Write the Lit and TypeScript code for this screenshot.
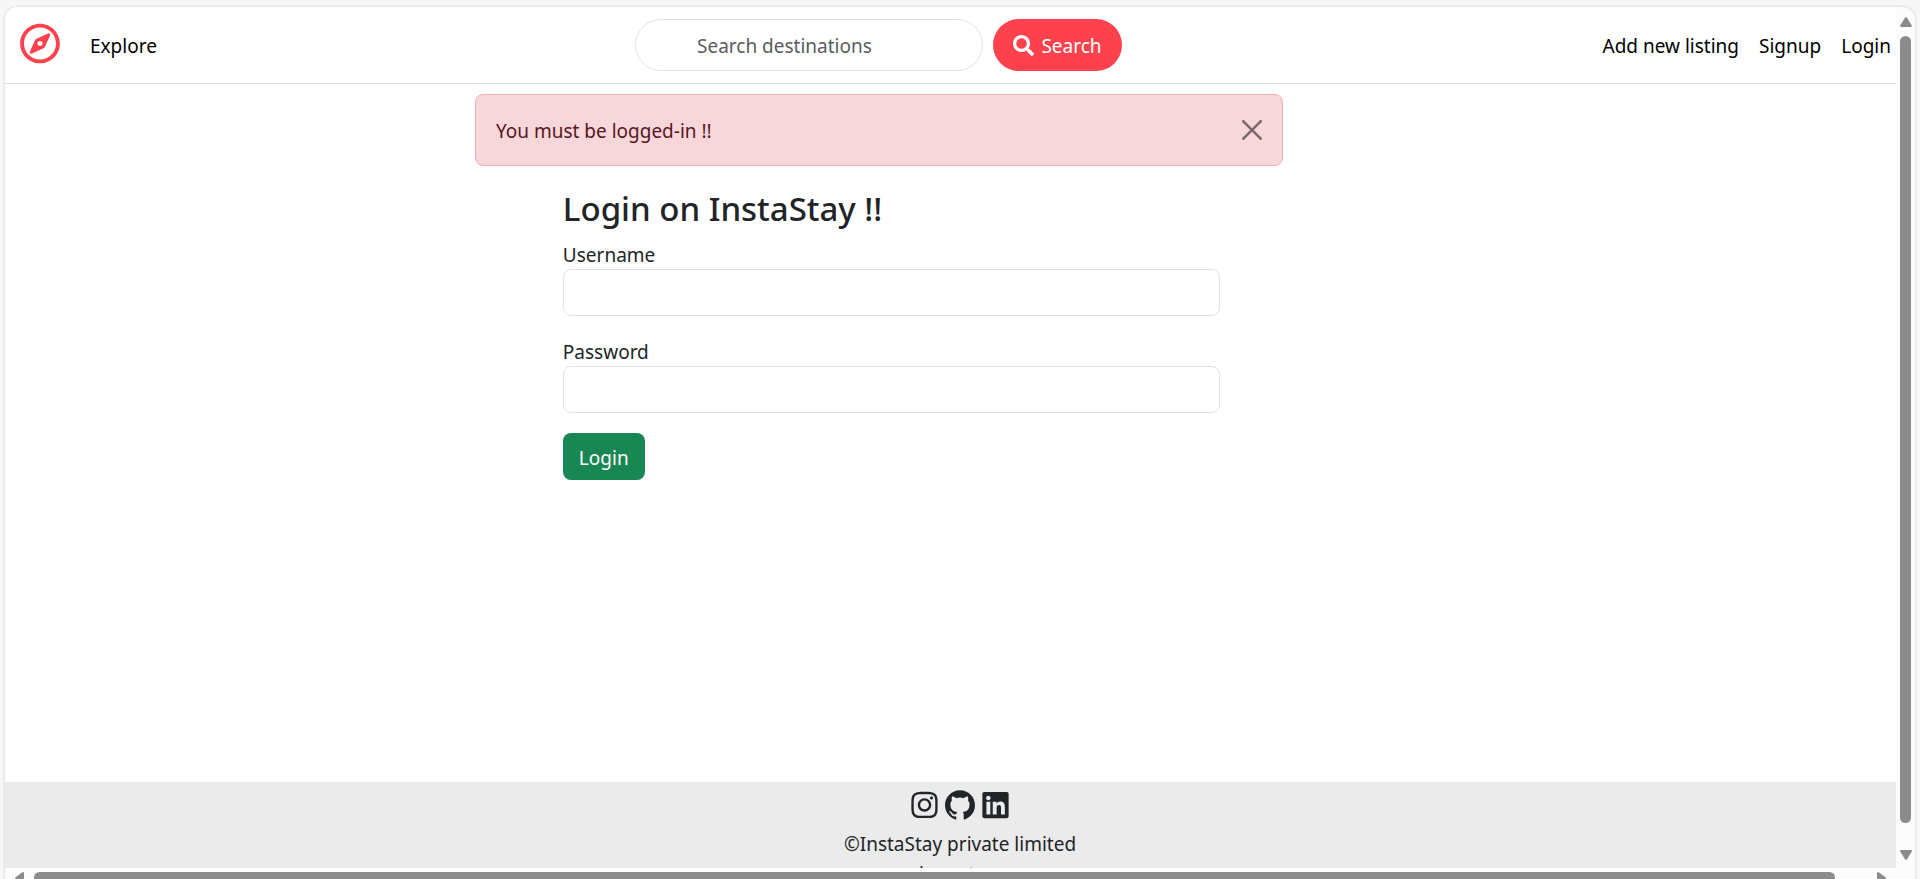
import { LitElement, html, css, svg } from "lit";
import { customElement, state } from "lit/decorators.js";

const icon = (viewBox: string, d: string, cls: string) =>
  html`<svg class=${cls} viewBox=${viewBox} aria-hidden="true">${svg`<path fill="currentColor" d=${d}></path>`}</svg>`;

const COMPASS =
  "M347.94 129.86L203.6 195.83a31.938 31.938 0 0 0-15.77 15.77l-65.97 144.34c-7.61 16.65 9.54 33.81 26.2 26.2l144.34-65.97a31.938 31.938 0 0 0 15.77-15.77l65.97-144.34c7.61-16.66-9.54-33.81-26.2-26.2zm-77.36 148.72c-12.47 12.47-32.69 12.47-45.16 0-12.47-12.47-12.47-32.69 0-45.16 12.47-12.47 32.69-12.47 45.16 0 12.47 12.47 12.47 32.69 0 45.16zM248 8C111.03 8 0 119.03 0 256s111.03 248 248 248 248-111.03 248-248S384.97 8 248 8zm0 448c-110.28 0-200-89.72-200-200S137.72 56 248 56s200 89.72 200 200-89.72 200-200 200z";
const MAGNIFIER =
  "M505 442.7L405.3 343c-4.5-4.5-10.6-7-17-7H372c27.6-35.3 44-79.7 44-128C416 93.1 322.9 0 208 0S0 93.1 0 208s93.1 208 208 208c48.3 0 92.7-16.4 128-44v16.3c0 6.4 2.5 12.5 7 17l99.7 99.7c9.4 9.4 24.6 9.4 33.9 0l28.3-28.3c9.4-9.4 9.4-24.6.1-34zM208 336c-70.7 0-128-57.2-128-128 0-70.7 57.2-128 128-128 70.7 0 128 57.2 128 128 0 70.7-57.2 128-128 128z";
const CROSS =
  "M.293.293a1 1 0 0 1 1.414 0L8 6.586 14.293.293a1 1 0 1 1 1.414 1.414L9.414 8l6.293 6.293a1 1 0 0 1-1.414 1.414L8 9.414l-6.293 6.293a1 1 0 0 1-1.414-1.414L6.586 8 .293 1.707a1 1 0 0 1 0-1.414z";
const INSTAGRAM =
  "M224.1 141c-63.6 0-114.9 51.3-114.9 114.9s51.3 114.9 114.9 114.9S339 319.5 339 255.9 287.7 141 224.1 141zm0 189.6c-41.1 0-74.7-33.5-74.7-74.7s33.5-74.7 74.7-74.7 74.7 33.5 74.7 74.7-33.6 74.7-74.7 74.7zm146.4-194.3c0 14.9-12 26.8-26.8 26.8-14.9 0-26.8-12-26.8-26.8s12-26.8 26.8-26.8 26.8 12 26.8 26.8zm76.1 27.2c-1.7-35.9-9.9-67.7-36.2-93.9-26.2-26.2-58-34.4-93.9-36.2-37-2.1-147.9-2.1-184.9 0-35.8 1.7-67.6 9.9-93.9 36.1s-34.4 58-36.2 93.9c-2.1 37-2.1 147.9 0 184.9 1.7 35.9 9.9 67.7 36.2 93.9s58 34.4 93.9 36.2c37 2.1 147.9 2.1 184.9 0 35.9-1.7 67.7-9.9 93.9-36.2 26.2-26.2 34.4-58 36.2-93.9 2.1-37 2.1-147.8 0-184.8zM398.8 388c-7.8 19.6-22.9 34.7-42.6 42.6-29.5 11.7-99.5 9-132.1 9s-102.7 2.6-132.1-9c-19.6-7.8-34.7-22.9-42.6-42.6-11.7-29.5-9-99.5-9-132.1s-2.6-102.7 9-132.1c7.8-19.6 22.9-34.7 42.6-42.6 29.5-11.7 99.5-9 132.1-9s102.7-2.6 132.1 9c19.6 7.8 34.7 22.9 42.6 42.6 11.7 29.5 9 99.5 9 132.1s2.7 102.7-9 132.1z";
const GITHUB =
  "M12 .297c-6.63 0-12 5.373-12 12 0 5.303 3.438 9.8 8.205 11.385.6.113.82-.258.82-.577 0-.285-.01-1.04-.015-2.04-3.338.724-4.042-1.61-4.042-1.61C4.422 18.07 3.633 17.7 3.633 17.7c-1.087-.744.084-.729.084-.729 1.205.084 1.838 1.236 1.838 1.236 1.07 1.835 2.809 1.305 3.495.998.108-.776.417-1.305.76-1.605-2.665-.3-5.466-1.332-5.466-5.93 0-1.31.465-2.38 1.235-3.22-.135-.303-.54-1.523.105-3.176 0 0 1.005-.322 3.3 1.23.96-.267 1.98-.399 3-.405 1.02.006 2.04.138 3 .405 2.28-1.552 3.285-1.23 3.285-1.23.645 1.653.24 2.873.12 3.176.765.84 1.23 1.91 1.23 3.22 0 4.61-2.805 5.625-5.475 5.92.42.36.81 1.096.81 2.22 0 1.606-.015 2.896-.015 3.286 0 .315.21.69.825.57C20.565 22.092 24 17.592 24 12.297c0-6.627-5.373-12-12-12";
const LINKEDIN =
  "M416 32H31.9C14.3 32 0 46.5 0 64.3v383.4C0 465.5 14.3 480 31.9 480H416c17.6 0 32-14.5 32-32.3V64.3c0-17.8-14.4-32.3-32-32.3zM135.4 416H69V202.2h66.5V416zm-33.2-243c-21.3 0-38.5-17.3-38.5-38.5S80.9 96 102.2 96c21.2 0 38.5 17.3 38.5 38.5 0 21.3-17.2 38.5-38.5 38.5zm282.1 243h-66.4V312c0-24.8-.5-56.7-34.5-56.7-34.6 0-39.9 27-39.9 54.9V416h-66.4V202.2h63.7v29.2h.9c8.9-16.8 30.6-34.5 62.9-34.5 67.2 0 79.7 44.3 79.7 101.9V416z";

@customElement("app-root")
export class AppRoot extends LitElement {
  @state() private alertOpen = true;

  static styles = css`
    :host {
      display: block;
      height: 100vh;
      background: #f7f7f7;
      color: #212529;
      font: 19px/30px "Noto Sans", "Open Sans", sans-serif;
    }
    *, *::before, *::after { box-sizing: border-box; }
    a { color: inherit; text-decoration: none; }
    button, input { font: inherit; }
    svg { display: block; flex: none; }

    .backdrop { height: 100%; padding: 7px 5px 0; overflow: hidden; }
    .window {
      display: grid;
      grid-template: minmax(0, 1fr) 11px / minmax(0, 1fr) 19px;
      height: 100%;
      overflow: hidden;
      background: #fcfcfc;
      border-radius: 12px 12px 0 0;
      box-shadow: 0 0 3px rgba(0, 0, 0, 0.2);
    }
    .page {
      display: flex;
      flex-direction: column;
      min-height: 0;
      overflow: hidden;
      background: #fff;
    }

    .navbar {
      display: grid;
      grid-template-columns: 1fr auto 1fr;
      align-items: center;
      flex: none;
      height: 77px;
      padding: 0 5px 0 15px;
      border-bottom: 1px solid #dee2e6;
      color: #000;
    }
    .nav-start { display: flex; align-items: center; gap: 30px; }
    .nav-link { padding-top: 2px; }
    .brand { padding-bottom: 4px; color: #fe424d; }
    .compass { width: 40px; height: 41px; }
    .search { display: flex; gap: 10px; margin-right: 154px; }
    .search-input {
      width: 348px;
      height: 52px;
      padding: 2px 20px 0 61px;
      border: 1px solid #dee2e6;
      border-radius: 26px;
      background: #fff;
      color: #212529;
    }
    .search-input::placeholder { color: #595c5f; opacity: 1; }
    .search-button {
      display: flex;
      align-items: center;
      justify-content: center;
      gap: 7px;
      width: 129px;
      height: 52px;
      padding: 0;
      border: 0;
      border-radius: 26px;
      background: #fe424d;
      color: #fff;
    }
    .search-text { padding-top: 2px; }
    .magnifier { width: 21px; height: 21px; }
    .nav-end { display: flex; justify-content: flex-end; gap: 20px; white-space: nowrap; }

    .content { flex: 1 0 auto; padding-top: 10px; }
    .alert {
      display: flex;
      align-items: center;
      justify-content: space-between;
      width: 42.75%;
      height: 72px;
      margin-left: 24.85%;
      padding: 0 20px;
      border: 1px solid #f1aeb5;
      border-radius: 8px;
      background: #f8d7da;
      color: #58151c;
    }
    .alert-text { padding-top: 2px; }
    .close { padding: 0; border: 0; background: none; color: #000; opacity: 0.5; }
    .cross { width: 20px; height: 20px; }

    .login { width: 34.75%; margin: 23px 0 0 29.5%; }
    .title { margin: 0 0 10px; font-size: 33px; font-weight: 500; line-height: 40px; }
    .field { margin-bottom: 20px; }
    .label { display: block; height: 30px; line-height: 32px; }
    .input {
      display: block;
      width: 100%;
      height: 47px;
      padding: 0 15px;
      border: 1px solid #dee2e6;
      border-radius: 8px;
      background: #fff;
      color: #212529;
    }
    .login-button {
      display: block;
      height: 47px;
      padding: 2px 16px 0;
      border: 0;
      border-radius: 8px;
      background: #198754;
      color: #fff;
    }

    .footer {
      flex: none;
      height: 86px;
      padding: 5px 0 0 19px;
      overflow: hidden;
      background: #ebebeb;
      text-align: center;
    }
    .social { display: flex; justify-content: center; align-items: center; gap: 7px; height: 36px; margin-bottom: 6px; }
    .social-link { display: block; }
    .instagram, .linkedin { width: 27px; height: 30px; }
    .github { width: 30px; height: 30px; }
    .legal-links { display: flex; justify-content: center; gap: 5px; }

    .bar-y { display: flex; flex-direction: column; align-items: center; padding: 10px 0 8px; }
    .bar-x { display: flex; align-items: flex-start; padding: 4px 10px 0 10px; }
    .arrow { width: 12px; height: 10px; color: #8b8b8b; }
    .arrow-side { width: 9px; height: 12px; color: #8b8b8b; }
    .thumb-y { flex: 1; width: 11px; margin: 9px 0 27px; border-radius: 6px; background: #8b8b8b; }
    .thumb-x { flex: 1; height: 11px; margin: 0 42px 0 10px; border-radius: 6px; background: #8b8b8b; }
  `;

  render() {
    return html`
      <div class="backdrop">
        <div class="window">
          <div class="page">
            <nav class="navbar">
              <div class="nav-start">
                <a class="brand" href="#" aria-label="Home">${icon("0 0 496 512", COMPASS, "compass")}</a>
                <a class="nav-link" href="#">Explore</a>
              </div>
              <form class="search" role="search" @submit=${this.hold}>
                <input class="search-input" type="search" placeholder="Search destinations" aria-label="Search destinations" />
                <button class="search-button" type="submit">
                  ${icon("0 0 512 512", MAGNIFIER, "magnifier")}<span class="search-text">Search</span>
                </button>
              </form>
              <div class="nav-end">
                <a class="nav-link" href="#">Add new listing</a>
                <a class="nav-link" href="#">Signup</a>
                <a class="nav-link" href="#">Login</a>
              </div>
            </nav>
            <main class="content">
              ${this.alertOpen
                ? html`<div class="alert" role="alert">
                    <span class="alert-text">You must be logged-in !!</span>
                    <button class="close" type="button" aria-label="Close" @click=${() => (this.alertOpen = false)}>
                      ${icon("0 0 16 16", CROSS, "cross")}
                    </button>
                  </div>`
                : null}
              <form class="login" @submit=${this.hold}>
                <h1 class="title">Login on InstaStay !!</h1>
                <div class="field">
                  <label class="label" for="username">Username</label>
                  <input class="input" id="username" name="username" type="text" />
                </div>
                <div class="field">
                  <label class="label" for="password">Password</label>
                  <input class="input" id="password" name="password" type="password" />
                </div>
                <button class="login-button" type="submit">Login</button>
              </form>
            </main>
            <footer class="footer">
              <div class="social">
                <a class="social-link" href="#" aria-label="Instagram">${icon("0 0 448 512", INSTAGRAM, "instagram")}</a>
                <a class="social-link" href="#" aria-label="GitHub">${icon("0 0 24 24", GITHUB, "github")}</a>
                <a class="social-link" href="#" aria-label="LinkedIn">${icon("0 0 448 512", LINKEDIN, "linkedin")}</a>
              </div>
              <div>©InstaStay private limited</div>
              <div class="legal-links"><a href="#">privacy</a><a href="#">terms</a></div>
            </footer>
          </div>
          <div class="bar-y" aria-hidden="true">
            ${icon("0 0 12 10", "M5 .8a1.2 1.2 0 0 1 2 0l4.8 7.6q.4 1.6-1 1.6H1.2q-1.4 0-1-1.6z", "arrow")}
            <div class="thumb-y"></div>
            ${icon("0 0 12 10", "M5 9.2a1.2 1.2 0 0 0 2 0l4.8-7.6q.4-1.6-1-1.6H1.2q-1.4 0-1 1.6z", "arrow")}
          </div>
          <div class="bar-x" aria-hidden="true">
            ${icon("0 0 9 12", "M.8 5a1.2 1.2 0 0 0 0 2l6.6 4.8q1.6.4 1.6-1V1.2q0-1.4-1.6-1z", "arrow-side")}
            <div class="thumb-x"></div>
            ${icon("0 0 9 12", "M8.2 5a1.2 1.2 0 0 1 0 2l-6.6 4.8q-1.6.4-1.6-1V1.2q0-1.4 1.6-1z", "arrow-side")}
          </div>
        </div>
      </div>
    `;
  }

  private hold(event: Event) {
    event.preventDefault();
  }
}
